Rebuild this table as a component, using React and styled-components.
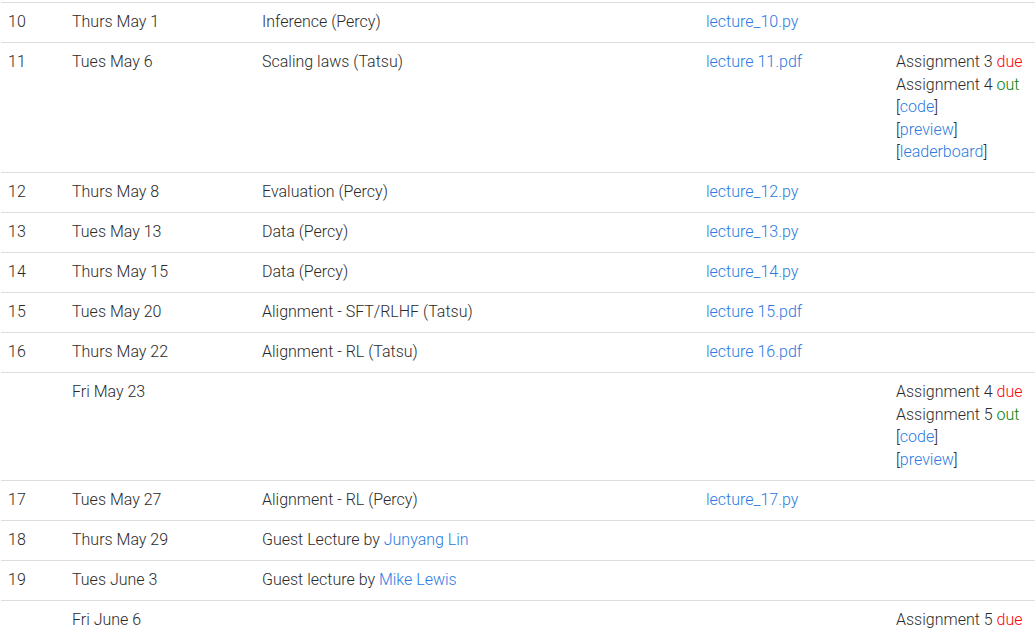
import React from "react";
import styled, { createGlobalStyle } from "styled-components";

const GlobalStyle = createGlobalStyle`
    html, body {
        margin: 0;
        padding: 0;
        background: #fff;
    }
    body {
        font-family: "Roboto Light", Roboto, "Noto Sans", sans-serif;
        font-weight: 300;
        font-size: 16px;
        color: #2b2b2b;
    }
`;

const Page = styled.div`
    padding: 2px 1px 0 1px;
`;

const Table = styled.table`
    width: 1034px;
    border-collapse: collapse;
    table-layout: fixed;
`;

const Row = styled.tr`
    border-top: 1px solid #ddd;
`;

const Cell = styled.td`
    box-sizing: border-box;
    padding: 8.25px 7px;
    vertical-align: top;
    line-height: 22.5px;
    white-space: nowrap;
    width: ${(p) => p.w};
`;

const Link = styled.a`
    color: #2a7ae2;
    text-decoration: none;
`;

const Due = styled.span`
    color: #f00;
`;

const Out = styled.span`
    color: #008000;
`;

const Line = styled.div``;

const Bracket = ({ children }) => (
    <Line>
        [<Link href="#">{children}</Link>]
    </Line>
);

const rows = [
    { n: "10", date: "Thurs May 1", topic: "Inference (Percy)", lec: "lecture_10.py" },
    {
        n: "11",
        date: "Tues May 6",
        topic: "Scaling laws (Tatsu)",
        lec: "lecture 11.pdf",
        extra: (
            <>
                <Line>Assignment 3 <Due>due</Due></Line>
                <Line>Assignment 4 <Out>out</Out></Line>
                <Bracket>code</Bracket>
                <Bracket>preview</Bracket>
                <Bracket>leaderboard</Bracket>
            </>
        ),
    },
    { n: "12", date: "Thurs May 8", topic: "Evaluation (Percy)", lec: "lecture_12.py" },
    { n: "13", date: "Tues May 13", topic: "Data (Percy)", lec: "lecture_13.py" },
    { n: "14", date: "Thurs May 15", topic: "Data (Percy)", lec: "lecture_14.py" },
    { n: "15", date: "Tues May 20", topic: "Alignment - SFT/RLHF (Tatsu)", lec: "lecture 15.pdf" },
    { n: "16", date: "Thurs May 22", topic: "Alignment - RL (Tatsu)", lec: "lecture 16.pdf" },
    {
        n: "",
        date: "Fri May 23",
        topic: "",
        extra: (
            <>
                <Line>Assignment 4 <Due>due</Due></Line>
                <Line>Assignment 5 <Out>out</Out></Line>
                <Bracket>code</Bracket>
                <Bracket>preview</Bracket>
            </>
        ),
    },
    { n: "17", date: "Tues May 27", topic: "Alignment - RL (Percy)", lec: "lecture_17.py" },
    {
        n: "18",
        date: "Thurs May 29",
        topic: (
            <>
                Guest Lecture by <Link href="#">Junyang Lin</Link>
            </>
        ),
    },
    {
        n: "19",
        date: "Tues June 3",
        topic: (
            <>
                Guest lecture by <Link href="#">Mike Lewis</Link>
            </>
        ),
    },
    {
        n: "",
        date: "Fri June 6",
        topic: "",
        extra: (
            <Line>Assignment 5 <Due>due</Due></Line>
        ),
    },
];

export default function App() {
    return (
        <Page>
            <GlobalStyle />
            <Table>
                <tbody>
                    {rows.map((r, i) => (
                        <Row key={i}>
                            <Cell w="64px">{r.n}</Cell>
                            <Cell w="190px">{r.date}</Cell>
                            <Cell w="444px">{r.topic}</Cell>
                            <Cell w="190px">
                                {r.lec ? <Link href="#">{r.lec}</Link> : null}
                            </Cell>
                            <Cell w="146px">{r.extra}</Cell>
                        </Row>
                    ))}
                </tbody>
            </Table>
        </Page>
    );
}
